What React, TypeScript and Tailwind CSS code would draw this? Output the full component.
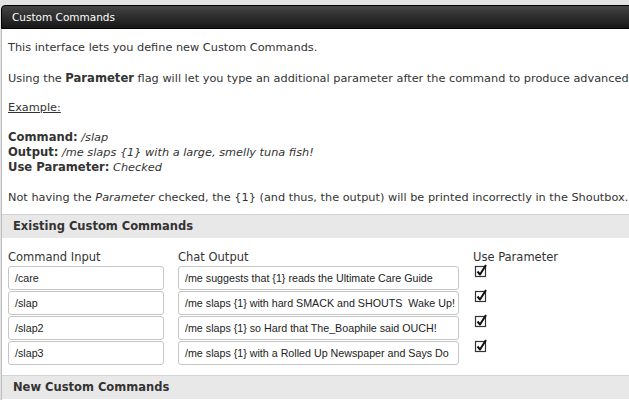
const rows = [
  { cmd: '/care', out: '/me suggests that {1} reads the Ultimate Care Guide' },
  { cmd: '/slap', out: '/me slaps {1} with hard SMACK and SHOUTS  Wake Up!' },
  { cmd: '/slap2', out: '/me slaps {1} so Hard that The_Boaphile said OUCH!' },
  { cmd: '/slap3', out: '/me slaps {1} with a Rolled Up Newspaper and Says Do' },
]

function CheckedBox() {
  return (
    <svg width="14" height="14" viewBox="0 0 14 14" className="block">
      <rect x="1.5" y="2.5" width="10" height="10" fill="white" stroke="#333" strokeWidth="1.2" />
      <path d="M3.5 7.5 L6 10.5 L12 1" fill="none" stroke="#111" strokeWidth="2" strokeLinejoin="round" />
    </svg>
  )
}

function SectionBar({ title }: { title: string }) {
  return (
    <div className="h-[24px] border-t border-[#d4d4d4] bg-[#e8e8e8] pl-[11px] flex items-center font-bold text-[11.5px] text-[#333]">
      {title}
    </div>
  )
}

const field =
  'h-[24px] rounded-[3px] border border-[#c6c6c6] bg-white pl-[6px] flex items-center text-[#222] text-[10.7px] overflow-hidden whitespace-pre'

export default function App() {
  return (
    <div
      className="w-[629px] h-[400px] overflow-hidden bg-[#e2e2e2] pt-[5px] text-[#333] text-[11.3px] leading-[15px]"
      style={{ fontFamily: '"DejaVu Sans", Verdana, sans-serif' }}
    >
      <div className="w-[700px] ml-[1px]">
        <div className="h-[24px] rounded-tl-[4px] border border-black bg-gradient-to-b from-[#444] to-[#181818] pl-[10px] flex items-center text-white text-[10.5px]">
          Custom Commands
        </div>
        <div className="bg-white border-l border-[#bdbdbd] h-[400px]">
          <div className="pl-[6px] pt-[11px] pb-[9px]">
            <p>This interface lets you define new Custom Commands.</p>
            <p className="mt-[16px] whitespace-nowrap">
              Using the <b className="text-[11.6px]">Parameter</b> flag will let you type an additional parameter after the command to produce advanced commands.
            </p>
            <p className="mt-[14px] underline">Example:</p>
            <div className="mt-[15px]">
              <div><b className="text-[11.6px]">Command:</b> <i>/slap</i></div>
              <div><b className="text-[11.6px]">Output:</b> <i>/me slaps {'{1}'} with a large, smelly tuna fish!</i></div>
              <div><b className="text-[11.6px]">Use Parameter:</b> <i>Checked</i></div>
            </div>
            <p className="mt-[15px] whitespace-nowrap">
              Not having the <i>Parameter</i> checked, the {'{1}'} (and thus, the output) will be printed incorrectly in the Shoutbox.
            </p>
          </div>
          <SectionBar title="Existing Custom Commands" />
          <div className="pl-[6px] pt-[11px] pb-[10px] grid grid-cols-[156px_281px_auto] gap-x-[14px] gap-y-[1px] items-start">
            <div className="text-[11.5px] leading-[16px]">Command Input</div>
            <div className="text-[11.5px] leading-[16px]">Chat Output</div>
            <div className="text-[11.5px] leading-[16px]">Use Parameter</div>
            {rows.map(r => (
              <div key={r.cmd} className="contents">
                <div className={field} style={{ fontFamily: '"Liberation Sans", Arial, sans-serif' }}>
                  {r.cmd}
                </div>
                <div className={field} style={{ fontFamily: '"Liberation Sans", Arial, sans-serif' }}>
                  {r.out}
                </div>
                <div className="pl-[1px] -mt-[2px]">
                  <CheckedBox />
                </div>
              </div>
            ))}
          </div>
          <SectionBar title="New Custom Commands" />
        </div>
      </div>
    </div>
  )
}
